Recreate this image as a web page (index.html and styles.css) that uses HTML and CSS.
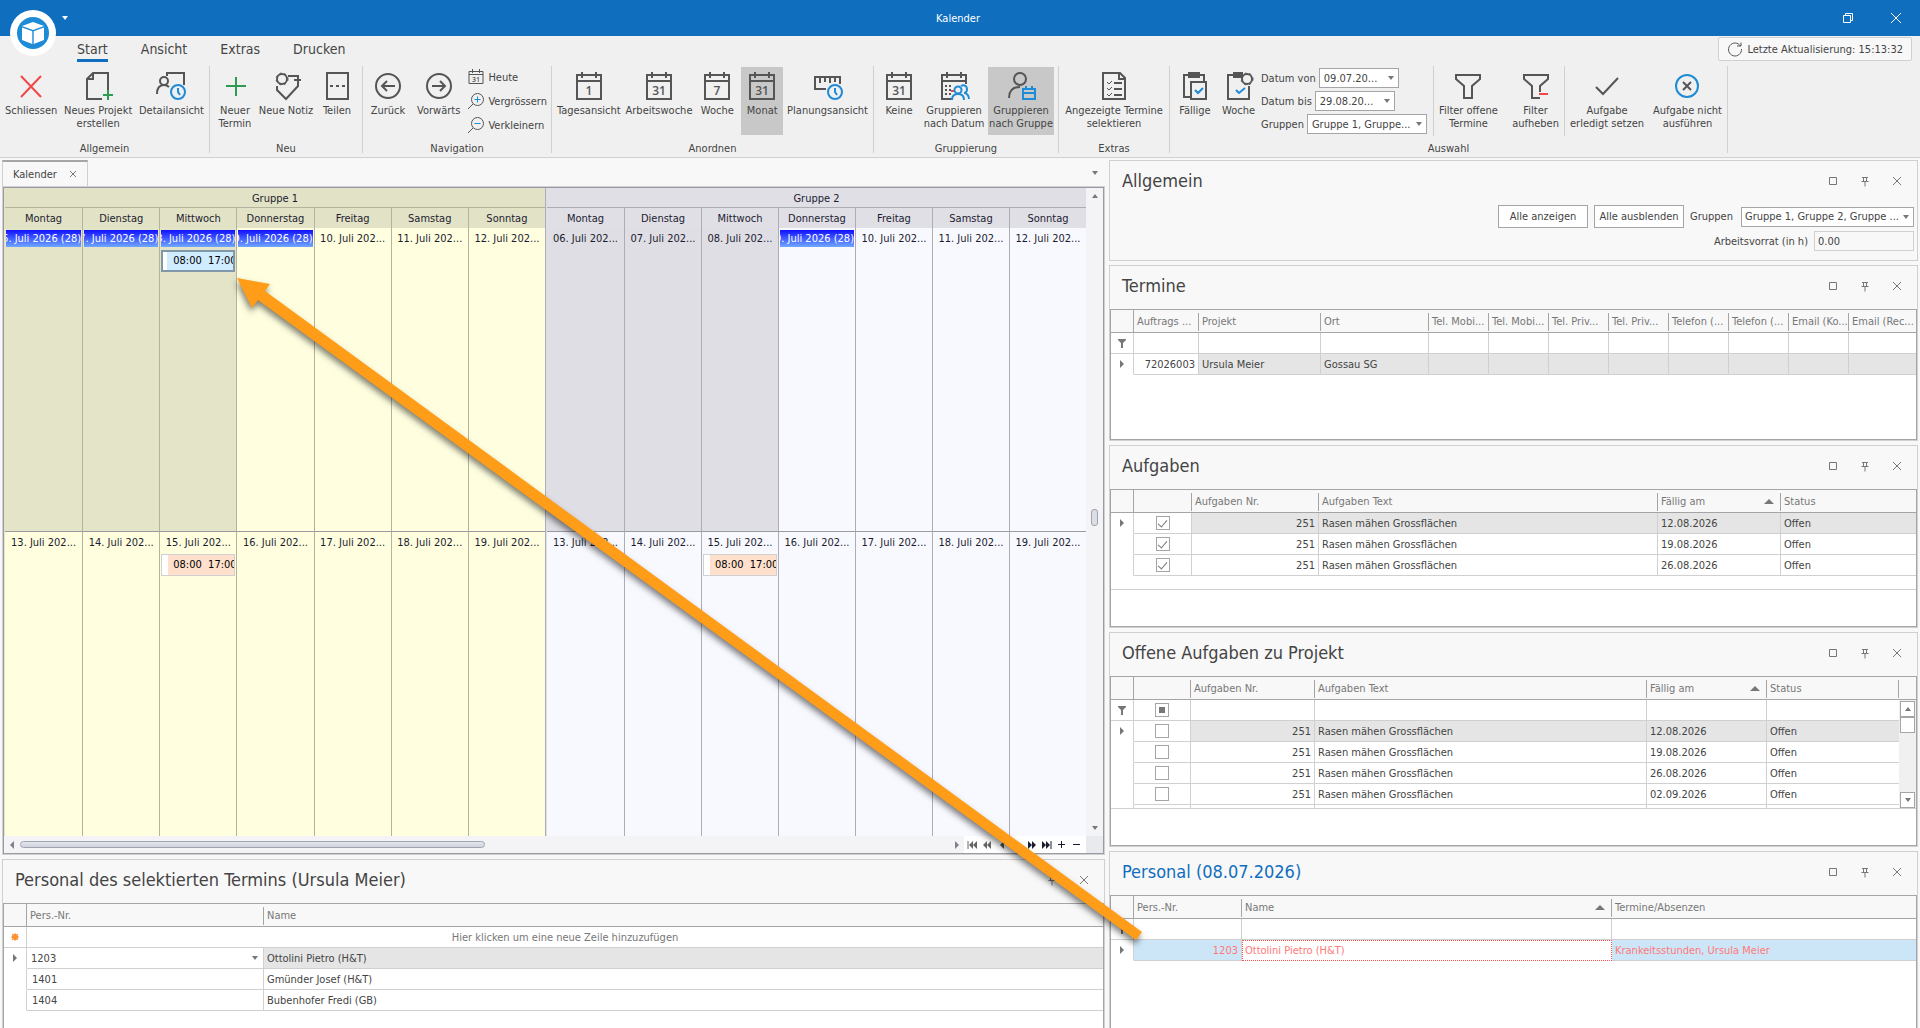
FILE: index.html
```html
<!DOCTYPE html>
<html lang="de">
<head>
  <meta charset="UTF-8" />
  <meta name="viewport" content="width=device-width, initial-scale=1.0"/>
  <title>Kalender</title>
  <link rel="stylesheet" href="styles.css">
</head>
<body>
  <!-- icon sprite -->
  <svg class="sprite" aria-hidden="true">
    <symbol id="i-cal" viewBox="0 0 32 32">
      <path d="M4 5h24v24H4zM4 11h24M9 2v6M23 2v6" fill="none" stroke="#555" stroke-width="2"/>
    </symbol>
    <symbol id="i-clock" viewBox="0 0 32 32">
      <circle cx="23" cy="22" r="7" fill="none" stroke="#1e8bd6" stroke-width="2"/>
      <path d="M23 18v4l2 3" fill="none" stroke="#1e8bd6" stroke-width="2"/>
    </symbol>
    <symbol id="i-max" viewBox="0 0 16 16"><path d="M4.500 4.500h7v7h-7z" fill="none" stroke="#777"/></symbol>
    <symbol id="i-pin" viewBox="0 0 16 16"><path d="M5 4.500h6M6.500 4.500v4M9.500 4.500v4M4.500 8.500h7M8 8.500v5" fill="none" stroke="#777"/></symbol>
    <symbol id="i-close" viewBox="0 0 16 16"><path d="M4 4l8 8M12 4l-8 8" fill="none" stroke="#777"/></symbol>
    <symbol id="i-filter" viewBox="0 0 12 12"><path d="M2 2h8v1L7 6v5H5V6L2 3z" fill="#777"/></symbol>
    <symbol id="i-row" viewBox="0 0 12 12"><path d="M4 2l4 4-4 4z" fill="#777"/></symbol>
  </svg>

  <header class="titlebar">
    <button class="app-button" aria-label="Menü">
      <svg viewBox="0 0 46 46">
        <circle cx="23" cy="23" r="23" fill="#fff"/>
        <circle cx="23" cy="23" r="16" fill="#1e8bd6"/>
        <path d="M23 12l11 4-11 4-11-4z" fill="#fff"/>
        <path d="M12 17.500l10.300 3.800V34L12 30zM34 17.500l-10.300 3.800V34L34 30z" fill="#fff"/>
      </svg>
    </button>
    <span class="caret caret-light"></span>
    <div class="window-title">Kalender</div>
    <div class="window-buttons">
      <button aria-label="Wiederherstellen"><svg viewBox="0 0 16 16"><path d="M3.500 5.500h7v7h-7zM5.500 5.500v-2h7v7h-2" fill="none" stroke="#fff"/></svg></button>
      <button aria-label="Fenster schliessen"><svg viewBox="0 0 16 16"><path d="M3 3l10 10M13 3L3 13" fill="none" stroke="#fff"/></svg></button>
    </div>
  </header>

  <div class="tabs-row">
    <nav class="tabs">
      <a href="#" class="active">Start</a>
      <a href="#">Ansicht</a>
      <a href="#">Extras</a>
      <a href="#">Drucken</a>
    </nav>
    <button class="refresh">
      <svg viewBox="0 0 16 16"><path d="M13.500 5A6.500 6.500 0 1 0 14.500 8M10 5h4V1.500" fill="none" stroke="#555"/></svg>
      Letzte Aktualisierung: 15:13:32
    </button>
  </div>

  <div class="ribbon">
    <section class="group g-allgemein">
      <div class="tools">
        <button class="tool"><svg viewBox="0 0 32 32"><path d="M6 6l20 21M26 6L6 27" fill="none" stroke="#f04848" stroke-width="2"/></svg><span>Schliessen</span></button>
        <button class="tool"><svg viewBox="0 0 32 32"><path d="M20 29H5V9l6-6h15v17M5 9h6V3" fill="none" stroke="#555" stroke-width="2"/><path d="M26 20v10M21 25h10" fill="none" stroke="#2f9a52" stroke-width="2"/></svg><span>Neues Projekt<br>erstellen</span></button>
        <button class="tool"><svg viewBox="0 0 32 32"><path d="M12 6V3h17v12M2 24c0-7 3-9 7-9 2 0 4 1 5 2" fill="none" stroke="#555" stroke-width="2"/><circle cx="9" cy="11" r="4" fill="none" stroke="#555" stroke-width="2"/><use href="#i-clock"/></svg><span>Detailansicht</span></button>
      </div>
      <div class="group-name">Allgemein</div>
    </section>
    <section class="group g-neu">
      <div class="tools">
        <button class="tool"><svg viewBox="0 0 32 32"><path d="M17 7v19M7 16h20" fill="none" stroke="#2f9a52" stroke-width="2"/></svg><span>Neuer<br>Termin</span></button>
        <button class="tool"><svg viewBox="0 0 32 32"><path d="M18 6h10v10L16 29 7 20v-4M24 10h7" fill="none" stroke="#555" stroke-width="2"/><circle cx="12" cy="9" r="5" fill="none" stroke="#555" stroke-width="2"/><circle cx="12" cy="9" r="6" fill="none" stroke="#555" stroke-width="1" stroke-dasharray="2 3"/></svg><span>Neue Notiz</span></button>
        <button class="tool"><svg viewBox="0 0 32 32"><path d="M6 3h21v26H6z" fill="none" stroke="#555" stroke-width="2"/><path d="M9 16h15" fill="none" stroke="#555" stroke-width="2" stroke-dasharray="3 3"/></svg><span>Teilen</span></button>
      </div>
      <div class="group-name">Neu</div>
    </section>
    <section class="group g-navigation">
      <div class="tools">
        <button class="tool"><svg viewBox="0 0 32 32"><circle cx="16" cy="16" r="12" fill="none" stroke="#555" stroke-width="2"/><path d="M23 16H10M15 11l-5 5 5 5" fill="none" stroke="#555" stroke-width="2"/></svg><span>Zurück</span></button>
        <button class="tool"><svg viewBox="0 0 32 32"><circle cx="16" cy="16" r="12" fill="none" stroke="#555" stroke-width="2"/><path d="M9 16h13M17 11l5 5-5 5" fill="none" stroke="#555" stroke-width="2"/></svg><span>Vorwärts</span></button>
        <div class="small-tools">
          <button class="small-tool"><svg viewBox="0 0 16 16"><path d="M1 2.500h14v12H1zM1 5.500h14M4.500 0v4M11.500 0v4" fill="none" stroke="#555"/><text x="8" y="13" class="num num-small">31</text></svg>Heute</button>
          <button class="small-tool"><svg viewBox="0 0 16 16"><circle cx="9.500" cy="6.500" r="6" fill="none" stroke="#555"/><path d="M5 11l-5 5" stroke="#555"/><path d="M9.500 3.500v6M6.500 6.500h6" stroke="#1e8bd6"/></svg>Vergrössern</button>
          <button class="small-tool"><svg viewBox="0 0 16 16"><circle cx="9.500" cy="6.500" r="6" fill="none" stroke="#555"/><path d="M5 11l-5 5" stroke="#555"/><path d="M6.500 6.500h6" stroke="#1e8bd6"/></svg>Verkleinern</button>
        </div>
      </div>
      <div class="group-name">Navigation</div>
    </section>
    <section class="group g-anordnen">
      <div class="tools">
        <button class="tool"><svg viewBox="0 0 32 32"><use href="#i-cal"/><text x="16" y="25" class="num">1</text></svg><span>Tagesansicht</span></button>
        <button class="tool"><svg viewBox="0 0 32 32"><use href="#i-cal"/><text x="16" y="25" class="num">31</text></svg><span>Arbeitswoche</span></button>
        <button class="tool"><svg viewBox="0 0 32 32"><use href="#i-cal"/><text x="16" y="25" class="num">7</text></svg><span>Woche</span></button>
        <button class="tool pressed"><svg viewBox="0 0 32 32"><use href="#i-cal"/><text x="16" y="25" class="num">31</text></svg><span>Monat</span></button>
        <button class="tool"><svg viewBox="0 0 32 32"><path d="M14 19H3V7h25v7M8 8v5M13 8v4M18 8v5M23 8v4" fill="none" stroke="#555" stroke-width="2"/><use href="#i-clock"/></svg><span>Planungsansicht</span></button>
      </div>
      <div class="group-name">Anordnen</div>
    </section>
    <section class="group g-gruppierung">
      <div class="tools">
        <button class="tool"><svg viewBox="0 0 32 32"><use href="#i-cal"/><text x="16" y="25" class="num">31</text></svg><span>Keine</span></button>
        <button class="tool"><svg viewBox="0 0 32 32"><path d="M14 29H4V5h24v9M4 11h24M9 2v6M23 2v6" fill="none" stroke="#555" stroke-width="2"/><path d="M7 16h8M7 20h6M7 24h6" stroke="#555" stroke-width="2" stroke-dasharray="2 2"/><path d="M13 21h3" stroke="#f04848" stroke-width="2"/><circle cx="20" cy="20" r="3.500" fill="none" stroke="#1e8bd6" stroke-width="2"/><path d="M14 30c0-4 2-6 6-6s6 2 6 6M23 16c3-2 6 0 6 3 0 2-1 4-3 4 3 0 5 3 5 6" fill="none" stroke="#1e8bd6" stroke-width="2"/></svg><span>Gruppieren<br>nach Datum</span></button>
        <button class="tool pressed"><svg viewBox="0 0 32 32"><circle cx="15" cy="9" r="6" fill="none" stroke="#555" stroke-width="2"/><path d="M4 28c0-7 4-11 11-11" fill="none" stroke="#555" stroke-width="2"/><path d="M18 19h12v10H18zM18 23h12M21 16v4M27 16v4" fill="none" stroke="#1e8bd6" stroke-width="2"/></svg><span>Gruppieren<br>nach Gruppe</span></button>
      </div>
      <div class="group-name">Gruppierung</div>
    </section>
    <section class="group g-extras">
      <div class="tools">
        <button class="tool"><svg viewBox="0 0 32 32"><path d="M5 3h17l5 5v21H5zM21 3v6h6M16 13h8M16 19h8M16 25h8" fill="none" stroke="#555" stroke-width="2"/><path d="M9 12l2 2 3-3M9 18l2 2 3-3M9 24l2 2 3-3" fill="none" stroke="#555" stroke-width="1"/></svg><span>Angezeigte Termine<br>selektieren</span></button>
      </div>
      <div class="group-name">Extras</div>
    </section>
    <section class="group g-auswahl">
      <div class="subgroups">
        <div class="tools sub-dates">
          <button class="tool"><svg viewBox="0 0 32 32"><path d="M11 27H5V5h20v6M10 3h10v4H10z" fill="none" stroke="#555" stroke-width="2"/><path d="M12 12h15v17H12z" fill="none" stroke="#555" stroke-width="2"/><path d="M16 20l3 3 5-5" fill="none" stroke="#1e8bd6" stroke-width="2"/></svg><span>Fällige</span></button>
          <button class="tool"><svg viewBox="0 0 32 32"><path d="M18 5H5v24h21V16M11 3h8v4h-8z" fill="none" stroke="#555" stroke-width="2"/><circle cx="24" cy="9" r="5" fill="none" stroke="#555" stroke-width="2"/><circle cx="24" cy="9" r="6" fill="none" stroke="#555" stroke-dasharray="2 3"/><path d="M13 20l3 3 6-5" fill="none" stroke="#1e8bd6" stroke-width="2"/></svg><span>Woche</span></button>
          <div class="fields">
            <div class="field"><label for="von">Datum von</label><span class="combo"><select id="von" class="w-date"><option>09.07.20...</option></select></span></div>
            <div class="field"><label for="bis">Datum bis</label><span class="combo"><select id="bis" class="w-date"><option>29.08.20...</option></select></span></div>
            <div class="field"><label for="gruppen">Gruppen</label><span class="combo"><select id="gruppen" class="w-groups"><option>Gruppe 1, Gruppe...</option></select></span></div>
          </div>
        </div>
        <div class="tools sub-filter">
          <button class="tool"><svg viewBox="0 0 32 32"><path d="M4 5h24v4l-8 7v12h-8V16L4 9z" fill="none" stroke="#555" stroke-width="2"/></svg><span>Filter offene<br>Termine</span></button>
          <button class="tool"><svg viewBox="0 0 32 32"><path d="M20 28h-8V16L4 9V5h24v4l-8 7v6" fill="none" stroke="#555" stroke-width="2"/><path d="M19 24h9" stroke="#f04848" stroke-width="2"/></svg><span>Filter<br>aufheben</span></button>
        </div>
        <div class="tools sub-tasks">
          <button class="tool"><svg viewBox="0 0 32 32"><path d="M5 17l7 7L27 8" fill="none" stroke="#555" stroke-width="2"/></svg><span>Aufgabe<br>erledigt setzen</span></button>
          <button class="tool"><svg viewBox="0 0 32 32"><circle cx="16" cy="16" r="11" fill="none" stroke="#1e8bd6" stroke-width="2"/><path d="M12 12l8 8M20 12l-8 8" fill="none" stroke="#555" stroke-width="2"/></svg><span>Aufgabe nicht<br>ausführen</span></button>
        </div>
      </div>
      <div class="group-name">Auswahl</div>
    </section>
  </div>

  <main class="workspace">
    <div class="column column-left">
      <section class="document">
        <div class="doc-tabs">
          <div class="doc-tab">Kalender <button aria-label="Tab schliessen"><svg viewBox="0 0 8 8"><path d="M1 1l6 6M7 1L1 7" stroke="#777" fill="none"/></svg></button></div>
          <span class="caret"></span>
        </div>
        <div class="calendar-frame">
          <div class="calendar">
            <div class="month">
              <div class="gruppe gruppe-1">
                <div class="gruppe-head">Gruppe 1</div>
                <div class="weekdays"><span>Montag</span><span>Dienstag</span><span>Mittwoch</span><span>Donnerstag</span><span>Freitag</span><span>Samstag</span><span>Sonntag</span></div>
                <div class="week">
                  <div class="day past"><div class="date selected"><span>06. Juli 2026 (28)</span></div></div>
                  <div class="day past"><div class="date selected"><span>07. Juli 2026 (28)</span></div></div>
                  <div class="day past"><div class="date selected"><span>08. Juli 2026 (28)</span></div><div class="termin active">08:00&nbsp; 17:00</div></div>
                  <div class="day"><div class="date selected"><span>09. Juli 2026 (28)</span></div></div>
                  <div class="day"><div class="date">10. Juli 202...</div></div>
                  <div class="day"><div class="date">11. Juli 202...</div></div>
                  <div class="day"><div class="date">12. Juli 202...</div></div>
                </div>
                <div class="week">
                  <div class="day"><div class="date">13. Juli 202...</div></div>
                  <div class="day"><div class="date">14. Juli 202...</div></div>
                  <div class="day"><div class="date">15. Juli 202...</div><div class="termin">08:00&nbsp; 17:00</div></div>
                  <div class="day"><div class="date">16. Juli 202...</div></div>
                  <div class="day"><div class="date">17. Juli 202...</div></div>
                  <div class="day"><div class="date">18. Juli 202...</div></div>
                  <div class="day"><div class="date">19. Juli 202...</div></div>
                </div>
              </div>
              <div class="gruppe gruppe-2">
                <div class="gruppe-head">Gruppe 2</div>
                <div class="weekdays"><span>Montag</span><span>Dienstag</span><span>Mittwoch</span><span>Donnerstag</span><span>Freitag</span><span>Samstag</span><span>Sonntag</span></div>
                <div class="week">
                  <div class="day past"><div class="date">06. Juli 202...</div></div>
                  <div class="day past"><div class="date">07. Juli 202...</div></div>
                  <div class="day past"><div class="date">08. Juli 202...</div></div>
                  <div class="day"><div class="date selected"><span>09. Juli 2026 (28)</span></div></div>
                  <div class="day"><div class="date">10. Juli 202...</div></div>
                  <div class="day"><div class="date">11. Juli 202...</div></div>
                  <div class="day"><div class="date">12. Juli 202...</div></div>
                </div>
                <div class="week">
                  <div class="day"><div class="date">13. Juli 202...</div></div>
                  <div class="day"><div class="date">14. Juli 202...</div></div>
                  <div class="day"><div class="date">15. Juli 202...</div><div class="termin">08:00&nbsp; 17:00</div></div>
                  <div class="day"><div class="date">16. Juli 202...</div></div>
                  <div class="day"><div class="date">17. Juli 202...</div></div>
                  <div class="day"><div class="date">18. Juli 202...</div></div>
                  <div class="day"><div class="date">19. Juli 202...</div></div>
                </div>
              </div>
            </div>
            <div class="vscroll"><i class="up"></i><span class="vthumb"></span><i class="down"></i></div>
            <div class="hscroll">
              <i class="left"></i><div class="htrack"><div class="hthumb"></div></div><i class="right"></i>
              <div class="pager">
                <button aria-label="Anfang"><svg viewBox="0 0 12 12"><path d="M2 2v8" stroke="#666"/><path d="M7 2v8L3 6zM11 2v8L7 6z" fill="#666"/></svg></button>
                <button aria-label="Seite zurück"><svg viewBox="0 0 12 12"><path d="M6 2v8L2 6zM10 2v8L6 6z" fill="#666"/></svg></button>
                <button aria-label="Zurück"><svg viewBox="0 0 12 12"><path d="M8 2v8L4 6z" fill="#555"/></svg></button>
                <button aria-label="Weiter"><svg viewBox="0 0 12 12"><path d="M4 2v8l4-4z" fill="#1c1c30"/></svg></button>
                <button aria-label="Seite weiter"><svg viewBox="0 0 12 12"><path d="M2 2v8l4-4zM6 2v8l4-4z" fill="#1c1c30"/></svg></button>
                <button aria-label="Ende"><svg viewBox="0 0 12 12"><path d="M10 2v8" stroke="#1c1c30"/><path d="M1 2v8l4-4zM5 2v8l4-4z" fill="#1c1c30"/></svg></button>
                <button aria-label="Hinzufügen"><svg viewBox="0 0 12 12"><path d="M5.500 2v7M2 5.500h7" stroke="#1c1c30" stroke-width="1"/></svg></button>
                <button aria-label="Entfernen"><svg viewBox="0 0 12 12"><path d="M2 5.500h7" stroke="#1c1c30" stroke-width="1"/></svg></button>
              </div>
            </div>
            <div class="corner"></div>
          </div>
        </div>
      </section>

      <section class="panel panel-last">
        <div class="panel-head">
          <h2>Personal des selektierten Termins (Ursula Meier)</h2>
          <div class="panel-buttons">
            <button aria-label="Anheften"><svg><use href="#i-pin"/></svg></button>
            <button aria-label="Schliessen"><svg><use href="#i-close"/></svg></button>
          </div>
        </div>
        <div class="grid-box">
          <table>
            <colgroup><col class="c-ind"><col class="c-237"><col></colgroup>
            <thead><tr><th></th><th>Pers.-Nr.</th><th>Name</th></tr></thead>
            <tbody>
              <tr class="filter"><td><svg viewBox="0 0 12 12"><circle cx="6" cy="6" r="3" fill="#ff9030"/><path d="M6 2v8M2 6h8M3 3l6 6M9 3L3 9" stroke="#ff9030"/></svg></td><td colspan="2" class="hint">Hier klicken um eine neue Zeile hinzuzufügen</td></tr>
              <tr class="current"><td><svg><use href="#i-row"/></svg></td><td class="plain"><span class="combo"><select class="cell-select" aria-label="Pers.-Nr."><option>1203</option></select></span></td><td>Ottolini Pietro (H&amp;T)</td></tr>
              <tr><td></td><td class="code">1401</td><td>Gmünder Josef (H&amp;T)</td></tr>
              <tr><td></td><td class="code">1404</td><td>Bubenhofer Fredi (GB)</td></tr>
            </tbody>
          </table>
        </div>
      </section>
    </div>

    <div class="column column-right">
      <section class="panel">
        <div class="panel-head">
          <h2>Allgemein</h2>
          <div class="panel-buttons">
            <button aria-label="Maximieren"><svg><use href="#i-max"/></svg></button>
            <button aria-label="Anheften"><svg><use href="#i-pin"/></svg></button>
            <button aria-label="Schliessen"><svg><use href="#i-close"/></svg></button>
          </div>
        </div>
        <div class="form">
          <div class="form-row">
            <button class="push">Alle anzeigen</button>
            <button class="push">Alle ausblenden</button>
            <label for="gruppen2">Gruppen</label>
            <span class="combo"><select id="gruppen2" class="w-all"><option>Gruppe 1, Gruppe 2, Gruppe ...</option></select></span>
          </div>
          <div class="form-row">
            <label for="vorrat">Arbeitsvorrat (in h)</label>
            <input id="vorrat" type="text" value="0.00" readonly>
          </div>
        </div>
      </section>

      <section class="panel">
        <div class="panel-head">
          <h2>Termine</h2>
          <div class="panel-buttons">
            <button aria-label="Maximieren"><svg><use href="#i-max"/></svg></button>
            <button aria-label="Anheften"><svg><use href="#i-pin"/></svg></button>
            <button aria-label="Schliessen"><svg><use href="#i-close"/></svg></button>
          </div>
        </div>
        <div class="grid-box">
          <table>
            <colgroup><col class="c-ind"><col class="c-65"><col class="c-122"><col class="c-108"><col class="c-60"><col class="c-60"><col class="c-60"><col class="c-60"><col class="c-60"><col class="c-60"><col class="c-60"><col></colgroup>
            <thead><tr><th></th><th>Auftrags ...</th><th>Projekt</th><th>Ort</th><th>Tel. Mobi...</th><th>Tel. Mobi...</th><th>Tel. Priv...</th><th>Tel. Priv...</th><th>Telefon (...</th><th>Telefon (...</th><th>Email (Ko...</th><th>Email (Rec...</th></tr></thead>
            <tbody>
              <tr class="filter"><td><svg><use href="#i-filter"/></svg></td><td></td><td></td><td></td><td></td><td></td><td></td><td></td><td></td><td></td><td></td><td></td></tr>
              <tr class="current"><td><svg><use href="#i-row"/></svg></td><td class="plain right">72026003</td><td>Ursula Meier</td><td>Gossau SG</td><td></td><td></td><td></td><td></td><td></td><td></td><td></td><td></td></tr>
            </tbody>
          </table>
        </div>
      </section>

      <section class="panel">
        <div class="panel-head">
          <h2>Aufgaben</h2>
          <div class="panel-buttons">
            <button aria-label="Maximieren"><svg><use href="#i-max"/></svg></button>
            <button aria-label="Anheften"><svg><use href="#i-pin"/></svg></button>
            <button aria-label="Schliessen"><svg><use href="#i-close"/></svg></button>
          </div>
        </div>
        <div class="grid-box">
          <div class="grid-view view-tasks">
            <table>
              <colgroup><col class="c-ind"><col class="c-58"><col class="c-127"><col><col class="c-123"><col class="c-135"></colgroup>
              <thead><tr><th></th><th></th><th>Aufgaben Nr.</th><th>Aufgaben Text</th><th class="sorted">Fällig am</th><th>Status</th></tr></thead>
              <tbody>
                <tr class="current"><td><svg><use href="#i-row"/></svg></td><td class="plain check"><input type="checkbox" checked aria-label="Erledigt"></td><td class="right">251</td><td>Rasen mähen Grossflächen</td><td>12.08.2026</td><td>Offen</td></tr>
                <tr><td></td><td class="check"><input type="checkbox" checked aria-label="Erledigt"></td><td class="right">251</td><td>Rasen mähen Grossflächen</td><td>19.08.2026</td><td>Offen</td></tr>
                <tr><td></td><td class="check"><input type="checkbox" checked aria-label="Erledigt"></td><td class="right">251</td><td>Rasen mähen Grossflächen</td><td>26.08.2026</td><td>Offen</td></tr>
              </tbody>
            </table>
          </div>
        </div>
      </section>

      <section class="panel">
        <div class="panel-head">
          <h2>Offene Aufgaben zu Projekt</h2>
          <div class="panel-buttons">
            <button aria-label="Maximieren"><svg><use href="#i-max"/></svg></button>
            <button aria-label="Anheften"><svg><use href="#i-pin"/></svg></button>
            <button aria-label="Schliessen"><svg><use href="#i-close"/></svg></button>
          </div>
        </div>
        <div class="grid-box">
          <div class="grid-view view-open">
            <table>
              <colgroup><col class="c-ind"><col class="c-57"><col class="c-124"><col><col class="c-120"><col class="c-132"></colgroup>
              <thead><tr><th></th><th></th><th>Aufgaben Nr.</th><th>Aufgaben Text</th><th class="sorted">Fällig am</th><th>Status</th></tr></thead>
              <tbody>
                <tr class="filter"><td><svg><use href="#i-filter"/></svg></td><td class="check"><input type="checkbox" class="mixed" aria-label="Filter"></td><td></td><td></td><td></td><td></td></tr>
                <tr class="current"><td><svg><use href="#i-row"/></svg></td><td class="plain check"><input type="checkbox" aria-label="Erledigt"></td><td class="right">251</td><td>Rasen mähen Grossflächen</td><td>12.08.2026</td><td>Offen</td></tr>
                <tr><td></td><td class="check"><input type="checkbox" aria-label="Erledigt"></td><td class="right">251</td><td>Rasen mähen Grossflächen</td><td>19.08.2026</td><td>Offen</td></tr>
                <tr><td></td><td class="check"><input type="checkbox" aria-label="Erledigt"></td><td class="right">251</td><td>Rasen mähen Grossflächen</td><td>26.08.2026</td><td>Offen</td></tr>
                <tr><td></td><td class="check"><input type="checkbox" aria-label="Erledigt"></td><td class="right">251</td><td>Rasen mähen Grossflächen</td><td>02.09.2026</td><td>Offen</td></tr>
                <tr><td></td><td></td><td></td><td></td><td></td><td></td></tr>
              </tbody>
            </table>
            <div class="grid-scroll">
              <div class="grid-scroll-head"></div>
              <button aria-label="Nach oben"><i class="up"></i></button>
              <span class="grid-thumb"></span>
              <button class="end" aria-label="Nach unten"><i class="down"></i></button>
            </div>
          </div>
        </div>
      </section>

      <section class="panel panel-last">
        <div class="panel-head">
          <h2 class="focused">Personal (08.07.2026)</h2>
          <div class="panel-buttons">
            <button aria-label="Maximieren"><svg><use href="#i-max"/></svg></button>
            <button aria-label="Anheften"><svg><use href="#i-pin"/></svg></button>
            <button aria-label="Schliessen"><svg><use href="#i-close"/></svg></button>
          </div>
        </div>
        <div class="grid-box">
          <table>
            <colgroup><col class="c-ind"><col class="c-108"><col><col class="c-304"></colgroup>
            <thead><tr><th></th><th>Pers.-Nr.</th><th class="sorted">Name</th><th>Termine/Absenzen</th></tr></thead>
            <tbody>
              <tr class="filter"><td><svg><use href="#i-filter"/></svg></td><td></td><td></td><td></td></tr>
              <tr class="absent"><td><svg><use href="#i-row"/></svg></td><td class="right">1203</td><td class="focus-cell">Ottolini Pietro (H&amp;T)</td><td>Krankeitsstunden, Ursula Meier</td></tr>
            </tbody>
          </table>
        </div>
      </section>
    </div>
  </main>

  <!-- arrow from the person to the appointment -->
  <svg class="pointer" viewBox="0 0 1920 1028" preserveAspectRatio="none" aria-hidden="true">
    <path d="M237 278L270 284L265 291L1142 932L1136 940L258 300L252 308Z" fill="#ff9c18"/>
  </svg>
</body>
</html>
```
FILE: styles.css
```css
:root {
  --blue: #106ebe;
  --ribbon: #f0f0f0;
  --panel: #f8f8f8;
  --line: #d0d0d0;
  --line-dark: #a5a5a5;
  --text: #444444;
  --text-muted: #777777;
}

* {
  margin: 0;
  padding: 0;
  box-sizing: border-box;
}

body {
  font-family: "DejaVu Sans Condensed", "DejaVu Sans", sans-serif;
  font-size: 11px;
  line-height: 13px;
  color: var(--text);
  background: var(--panel);
  height: 100vh;
  overflow: hidden;
  display: flex;
  flex-direction: column;
}

button,
select,
input {
  font: inherit;
  color: inherit;
  background: none;
  border: 0;
  border-radius: 0;
}

svg {
  display: block;
}

.sprite {
  position: absolute;
  width: 0;
  height: 0;
}

/* small triangles */
.caret,
.combo::after,
i.up,
i.down,
i.left,
i.right {
  display: block;
  width: 0;
  height: 0;
  border: 3px solid transparent;
}

.caret,
.combo::after,
i.down {
  border-top: 4px solid #777;
  border-bottom: 0;
}

i.up {
  border-bottom: 4px solid #777;
  border-top: 0;
}

i.left {
  border-width: 4px;
  border-left: 0;
  border-right-color: #808090;
}

i.right {
  border-width: 4px;
  border-right: 0;
  border-left-color: #808090;
}

.caret-light {
  border-top-color: #fff;
}

/* title bar */
.titlebar {
  flex: none;
  height: 36px;
  background: var(--blue);
  color: #fff;
  display: flex;
  align-items: center;
}

.app-button {
  position: relative;
  z-index: 2;
  width: 46px;
  height: 46px;
  margin: 30px 6px 0 10px;
}

.window-title {
  flex: 1;
  text-align: center;
  padding-left: 24px;
}

.window-buttons {
  display: flex;
}

.window-buttons button {
  width: 48px;
  height: 36px;
}

.window-buttons svg {
  width: 16px;
  height: 16px;
  margin: 0 auto;
}

/* ribbon tabs */
.tabs-row {
  flex: none;
  height: 29px;
  background: var(--ribbon);
  display: flex;
  justify-content: space-between;
  padding: 1px 8px 0 77px;
}

.tabs {
  display: flex;
  gap: 33px;
  font-size: 14px;
  line-height: 25px;
}

.tabs a {
  color: var(--text);
  text-decoration: none;
  height: 25px;
}

.tabs .active {
  border-bottom: 3px solid var(--blue);
}

.refresh {
  height: 24px;
  padding: 0 8px;
  display: flex;
  align-items: center;
  gap: 4px;
  background: var(--panel);
  border: 1px solid var(--line);
  border-radius: 2px;
}

.refresh svg {
  width: 16px;
  height: 16px;
}

/* ribbon */
.ribbon {
  flex: none;
  height: 93px;
  padding-top: 1px;
  background: var(--ribbon);
  border-bottom: 1px solid var(--line);
  display: flex;
}

.group {
  height: 87px;
  border-right: 1px solid var(--line);
  display: flex;
  flex-direction: column;
  justify-content: space-between;
}

.g-allgemein { width: 210px; }
.g-neu { width: 153px; }
.g-navigation { width: 189px; }
.g-anordnen { width: 322px; }
.g-gruppierung { width: 185px; }
.g-extras { width: 111px; }
.g-auswahl { width: 558px; }

.tools {
  display: flex;
  justify-content: space-between;
  padding: 1px 4px 0;
}

.tool {
  height: 68px;
  min-width: 42px;
  padding: 3px 1px;
  display: flex;
  flex-direction: column;
  align-items: center;
  justify-content: flex-start;
  gap: 2px;
  white-space: nowrap;
}

.g-extras .tools {
  justify-content: center;
}

.tool svg {
  flex: none;
  width: 32px;
  height: 32px;
}

.pressed {
  background: #c8c8c8;
}

.group-name {
  text-align: center;
  line-height: 9px;
}

.num {
  font: 600 12px "Open Sans", sans-serif;
  fill: #555;
  text-anchor: middle;
}

.num-small {
  font-size: 7px;
}

.small-tools {
  display: flex;
  flex-direction: column;
  gap: 4px;
}

.small-tool {
  height: 20px;
  display: flex;
  align-items: center;
  gap: 4px;
}

.small-tool svg {
  width: 16px;
  height: 16px;
}

.subgroups {
  display: flex;
}

.subgroups .tools {
  height: 70px;
}

.sub-dates { width: 264px; border-right: 1px solid var(--line); }
.sub-filter { width: 131px; border-right: 1px solid var(--line); }
.sub-tasks { flex: 1; }

.fields {
  display: flex;
  flex-direction: column;
  gap: 3px;
  padding-top: 1px;
  width: 168px;
}

.field {
  display: flex;
  align-items: center;
  gap: 3px;
}

/* inputs */
.combo {
  position: relative;
  display: block;
}

.combo::after {
  content: "";
  position: absolute;
  right: 5px;
  top: 8px;
}

.combo select {
  display: block;
  appearance: none;
  height: 20px;
  padding: 0 4px;
  background: #fff;
  border: 1px solid var(--line-dark);
}

.combo .w-date { width: 80px; }
.combo .w-groups { width: 120px; }
.combo .w-all { width: 173px; padding: 0 3px; }

.combo .cell-select {
  width: 100%;
  border: 0;
}

.push {
  width: 90px;
  height: 23px;
  background: #fff;
  border: 1px solid var(--line-dark);
}

.form {
  padding: 1px 3px 9px;
  display: flex;
  flex-direction: column;
  gap: 3px;
}

.form-row {
  display: flex;
  justify-content: flex-end;
  align-items: center;
  gap: 6px;
}

.form-row label + .combo {
  margin-left: 2px;
}

#vorrat {
  width: 100px;
  height: 20px;
  padding: 0 3px;
  border: 1px solid var(--line);
}

/* workspace */
.workspace {
  flex: 1;
  min-height: 0;
  padding: 2px 2px 0;
  display: grid;
  grid-template-columns: minmax(0, 1103fr) minmax(0, 809fr);
  gap: 4px;
}

.column {
  display: grid;
  gap: 4px;
  min-height: 0;
}

.column-left {
  grid-template-rows: minmax(0, 695fr) minmax(0, 169fr);
}

.column-right {
  grid-template-rows: auto minmax(0, 176fr) minmax(0, 183fr) minmax(0, 215fr) minmax(0, 177fr);
}

.document {
  display: flex;
  flex-direction: column;
  min-height: 0;
}

.doc-tabs {
  flex: none;
  display: flex;
  justify-content: space-between;
  align-items: center;
  padding-right: 7px;
}

.doc-tab {
  height: 26px;
  padding: 0 10px;
  display: flex;
  align-items: center;
  gap: 12px;
  background: var(--panel);
  border: 1px solid var(--line);
  border-top: 2px solid var(--line-dark);
  border-bottom: 0;
}

.doc-tab svg {
  width: 8px;
  height: 8px;
}

.calendar-frame {
  flex: 1;
  min-height: 0;
  border: 1px solid var(--line);
  display: flex;
}

.calendar {
  flex: 1;
  border: 1px solid #9a9aa4;
  display: grid;
  grid-template-columns: minmax(0, 1fr) 17px;
  grid-template-rows: minmax(0, 1fr) 17px;
}

.month {
  display: grid;
  grid-template-columns: 1fr 1fr;
}

.gruppe {
  min-width: 0;
  display: grid;
  grid-template-rows: 20px 20px 1fr 1fr;
  padding-left: 1px;
  color: #1c1c30;
  background: var(--shade);
}

.gruppe-1 {
  --head: #e2e2c6;
  --shade: #e4e4c9;
  --free: #ffffe0;
  --edge: #b4b49c;
}

.gruppe-2 {
  --head: #e0dfe6;
  --shade: #dfdee4;
  --free: #f8f9ff;
  --edge: #adadb6;
  border-left: 1px solid var(--edge);
}

.gruppe-head,
.weekdays span {
  background: var(--head);
  border-bottom: 1px solid var(--edge);
  text-align: center;
  line-height: 21px;
}

.weekdays,
.week {
  display: grid;
  grid-template-columns: repeat(7, minmax(0, 1fr));
}

.weekdays span + span,
.day + .day {
  border-left: 1px solid var(--edge);
}

.day {
  background: var(--free);
  padding: 2px 1px 0;
}

.week:nth-child(3) .day {
  border-bottom: 1px solid #9a9aa0;
}

.past {
  background: var(--shade);
}

.date {
  height: 17px;
  line-height: 17px;
  text-align: center;
  white-space: nowrap;
  overflow: hidden;
}

.selected {
  display: flex;
  justify-content: flex-end;
  color: #fff;
  background: linear-gradient(#1010ff, #70a8ff);
}

.termin {
  height: 22px;
  margin-top: 3px;
  padding-left: 11px;
  line-height: 20px;
  white-space: nowrap;
  overflow: hidden;
  color: #000;
  background: #ffe0cc;
  border: 1px solid var(--line);
  box-shadow: inset 6px 0 #fff;
}

.termin.active {
  background: #d0ecff;
  border: 2px solid #8098a8;
  line-height: 18px;
  padding-left: 10px;
  box-shadow: inset 4px 0 #fff;
}

.vscroll {
  background: #f4f4f7;
  display: flex;
  flex-direction: column;
  align-items: center;
  justify-content: space-between;
  padding: 6px 0;
}

.vthumb {
  width: 7px;
  height: 17px;
  margin-top: 10px;
  border: 1px solid #a0a4b0;
  border-radius: 3px;
  background: #dcdee6;
}

.hscroll {
  background: #f4f4f7;
  display: flex;
  align-items: center;
  padding-left: 6px;
}

.htrack {
  flex: 1;
  padding: 0 6px;
}

.hthumb {
  width: 50%;
  height: 7px;
  border: 1px solid #a0a4b0;
  border-radius: 4px;
  background: linear-gradient(#e4e6ec, #d0d3dc);
}

.pager {
  margin-left: 5px;
  height: 17px;
  display: flex;
  align-items: center;
  gap: 3px;
  padding: 0 3px 0 2px;
  background: #fff;
}

.pager svg {
  width: 12px;
  height: 12px;
}

.corner {
  background: #e8eaee;
}

/* docked panels */
.panel {
  min-height: 0;
  border: 1px solid var(--line);
  display: flex;
  flex-direction: column;
  overflow: hidden;
}

.panel-last {
  border-bottom: 0;
}

.panel-head {
  flex: none;
  height: 43px;
  padding: 0 4px 3px 12px;
  display: flex;
  align-items: center;
  justify-content: space-between;
}

.panel h2 {
  font-size: 18px;
  font-weight: normal;
  line-height: 22px;
}

.panel .focused {
  color: var(--blue);
}

.panel-buttons {
  display: flex;
}

.panel-buttons button {
  width: 32px;
  height: 24px;
}

.panel-buttons svg {
  width: 16px;
  height: 16px;
  margin: 0 auto;
}

.grid-box {
  flex: 1;
  min-height: 0;
  background: #fff;
  border: 1px solid var(--line-dark);
}

.panel-last .grid-box {
  border-bottom: 0;
}

.grid-view {
  display: flex;
  overflow: hidden;
  border-bottom: 1px solid var(--line);
}

.view-tasks { height: 100px; }
.view-open { height: 132px; }

table {
  width: 100%;
  align-self: flex-start;
  table-layout: fixed;
  border-collapse: separate;
  border-spacing: 0;
}

.c-ind { width: 23px; }
.c-57 { width: 57px; }
.c-58 { width: 58px; }
.c-60 { width: 60px; }
.c-65 { width: 65px; }
.c-108 { width: 108px; }
.c-120 { width: 120px; }
.c-122 { width: 122px; }
.c-123 { width: 123px; }
.c-124 { width: 124px; }
.c-127 { width: 127px; }
.c-132 { width: 132px; }
.c-135 { width: 135px; }
.c-237 { width: 237px; }
.c-304 { width: 304px; }

th {
  height: 23px;
  padding: 0 3px;
  font-weight: normal;
  text-align: left;
  white-space: nowrap;
  overflow: hidden;
  color: var(--text-muted);
  background: linear-gradient(var(--line-dark), var(--line-dark)) no-repeat right 0 top 3px / 1px 18px var(--panel);
  border-bottom: 1px solid var(--line-dark);
}

th:first-child {
  background-size: 1px 22px;
  background-position: right 0 top 0;
}

th:last-child {
  background-size: 0 0;
}

.view-open th:last-child {
  background-size: 1px 18px;
}

.sorted::after {
  content: "";
  float: right;
  margin: 4px 4px 0 0;
  border: 5px solid transparent;
  border-bottom-color: #777;
  border-top: 0;
}

td {
  height: 21px;
  padding: 0 3px;
  white-space: nowrap;
  overflow: hidden;
  border-right: 1px solid var(--line);
  border-bottom: 1px solid var(--line);
}

td:last-child {
  border-right: 0;
}

td:first-child {
  padding: 0 5px;
  border-bottom-color: transparent;
}

.filter td:first-child {
  border-bottom-color: var(--line);
}

td svg {
  width: 12px;
  height: 12px;
}

.current td {
  background: #e5e5e5;
}

.current td:first-child,
.current .plain {
  background: #fff;
}

.plain:has(.cell-select) {
  padding: 0;
}

.code {
  padding-left: 5px;
}

.right {
  text-align: right;
}

.hint {
  text-align: center;
  color: var(--text-muted);
}

.absent td {
  color: #ff7878;
  background: #cde6f7;
}

.absent td:first-child {
  background: #fff;
}

.absent .focus-cell {
  padding: 0 2px;
  background: #fff;
  border: 1px dotted #ff5050;
}

.check {
  padding: 0;
}

.check input {
  display: block;
  appearance: none;
  width: 14px;
  height: 14px;
  margin: 0 auto;
  background: #fff;
  border: 1px solid var(--line-dark);
}

.check input:checked::after {
  content: "";
  display: block;
  width: 4px;
  height: 8px;
  margin: 1px auto;
  border: solid #777;
  border-width: 0 1px 1px 0;
  transform: rotate(40deg);
}

.check .mixed {
  padding: 3px;
  background: #777 content-box;
}

.grid-scroll {
  flex: none;
  width: 17px;
  display: flex;
  flex-direction: column;
  background: #f0f0f0;
}

.grid-scroll-head {
  height: 23px;
  margin-bottom: 1px;
  background: var(--panel);
  border-bottom: 1px solid var(--line-dark);
}

.grid-scroll button,
.grid-thumb {
  width: 15px;
  height: 16px;
  margin-left: 1px;
  background: #fff;
  border: 1px solid var(--line-dark);
}

.grid-scroll i {
  margin: 0 auto;
}

.grid-scroll .end {
  margin-top: auto;
}

.pointer {
  position: absolute;
  left: 0;
  top: 0;
  width: 100%;
  height: 100%;
  pointer-events: none;
  filter: drop-shadow(-1px 4px 3px rgba(0, 0, 0, 0.5));
}
```
